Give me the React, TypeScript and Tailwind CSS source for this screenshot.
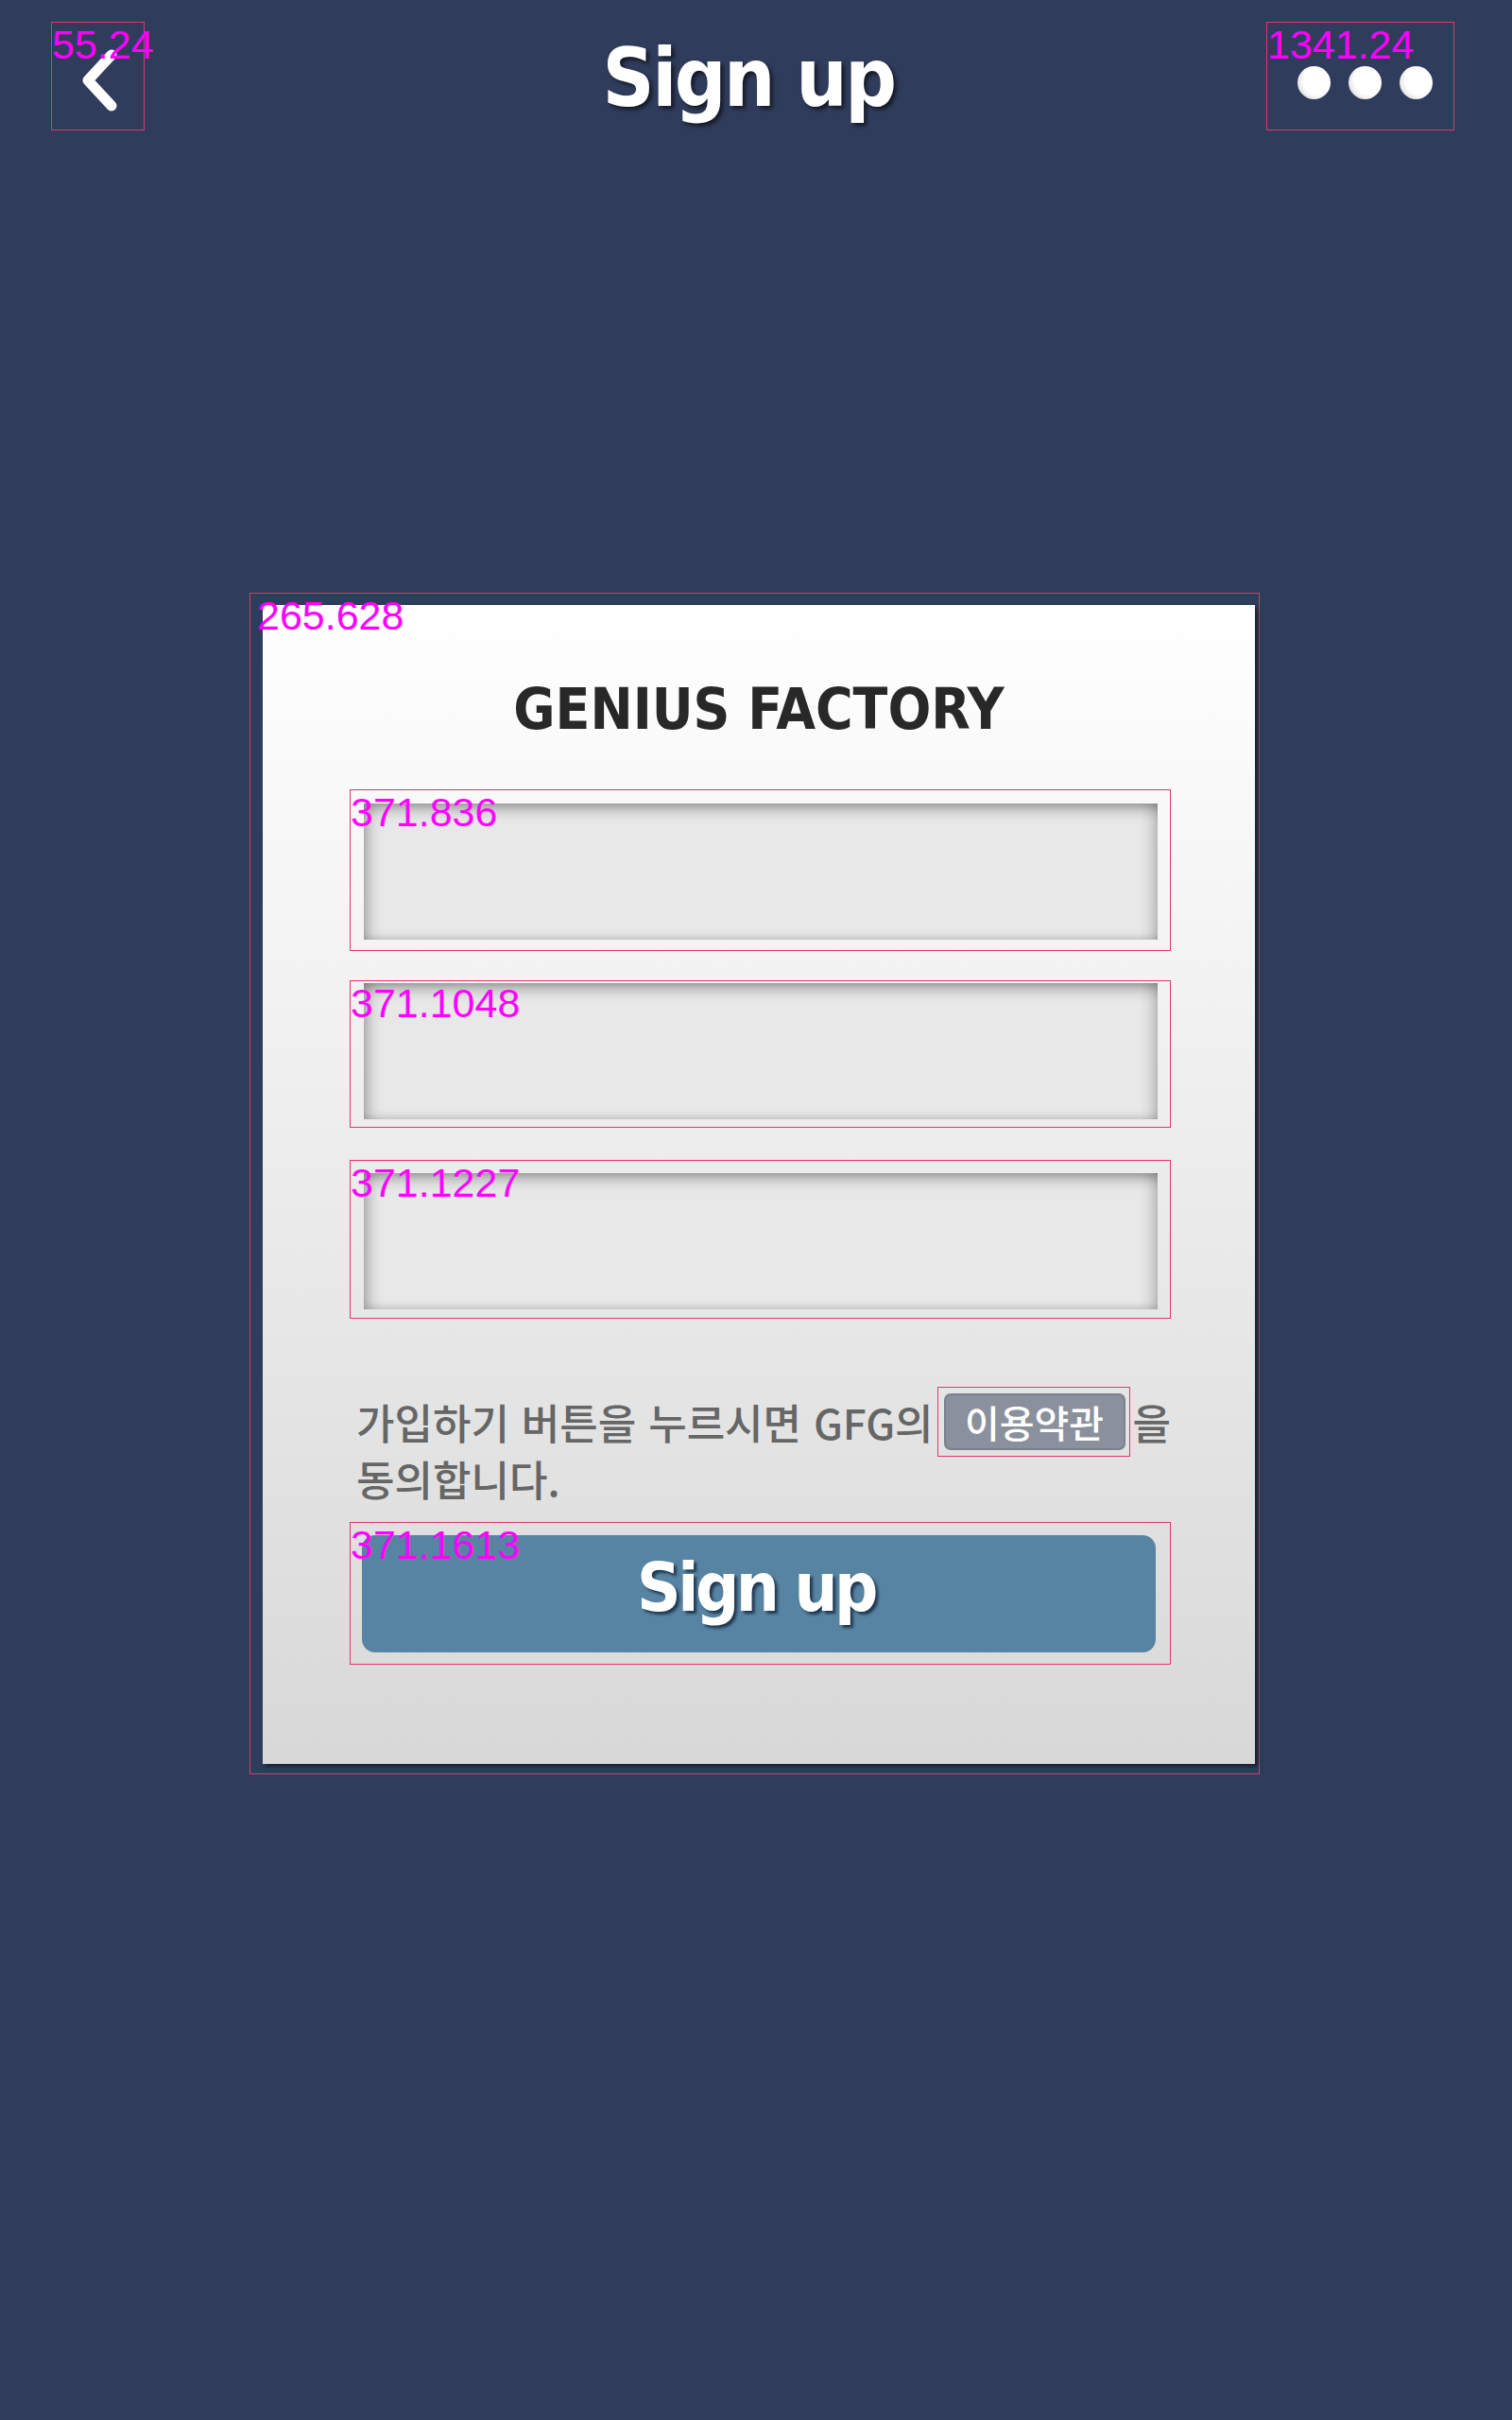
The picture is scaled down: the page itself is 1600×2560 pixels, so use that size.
import React from "react";

const titleFont =
  "font-['DejaVu_Sans_Condensed','DejaVu_Sans',sans-serif] font-stretch-condensed font-bold";
const koFont = "font-['Noto_Sans_CJK_KR','Noto_Sans',sans-serif]";

// debug outline + coordinate tag drawn over an element
function Marked({
  label,
  tag = "left-0",
  className,
  children,
}: {
  label?: string;
  tag?: string;
  className: string;
  children: React.ReactNode;
}) {
  return (
    <div className={`relative border border-[#e5356b] ${className}`}>
      {children}
      {label && (
        <span
          className={`pointer-events-none absolute top-[2px] z-10 whitespace-nowrap font-['Liberation_Sans',sans-serif] text-[43px] leading-none text-[#ff00ff] ${tag}`}
        >
          {label}
        </span>
      )}
    </div>
  );
}

function Field() {
  return (
    <input
      type="text"
      className="block h-[144px] w-[840px] bg-[#e8e8e8] outline-none shadow-[inset_0_14px_16px_-10px_rgba(0,0,0,0.4),inset_14px_0_16px_-10px_rgba(0,0,0,0.3),inset_-14px_0_16px_-10px_rgba(0,0,0,0.24),inset_0_-10px_12px_-10px_rgba(0,0,0,0.18)]"
    />
  );
}

function Dot() {
  return (
    <span className="block h-[35px] w-[35px] rounded-full bg-[radial-gradient(circle_at_62%_42%,#ffffff_0%,#ffffff_52%,#ececec_68%,#a4a4a4_100%)]" />
  );
}

export default function App() {
  return (
    <div className="min-h-[2560px] w-full bg-[#303c5c]">
      <header className="flex items-start pt-[23px]">
        <Marked label="55.24" className="ml-[54px] h-[115px] w-[99px]">
          <svg viewBox="0 0 97 113" className="absolute inset-0 h-full w-full">
            <path
              d="M63 34 L38 61 L63 88"
              fill="none"
              stroke="#ffffff"
              strokeWidth="11"
              strokeLinecap="round"
              strokeLinejoin="round"
            />
          </svg>
        </Marked>

        <h1
          className={`mt-[17px] flex-1 pl-[91px] text-center text-[85px] leading-none tracking-[-2.5px] text-white ${titleFont} [text-shadow:3px_3px_4px_rgba(0,0,0,0.6)]`}
        >
          Sign up
        </h1>

        <Marked label="1341.24" className="mr-[61px] h-[115px] w-[199px]">
          <div className="flex gap-[19px] pl-[32px] pt-[46px]">
            <Dot />
            <Dot />
            <Dot />
          </div>
        </Marked>
      </header>

      <Marked
        label="265.628"
        tag="left-[7px]"
        className="ml-[264px] mt-[489px] w-[1069px] pb-[10px] pl-[13px] pr-[4px] pt-[12px]"
      >
        <div className="w-[1050px] bg-[linear-gradient(to_bottom,#ffffff,#d8d8d8)] pb-[105px] pt-[80px] shadow-[3px_3px_4px_rgba(0,0,0,0.45)]">
          <h2
            className={`text-center text-[60px] leading-none text-[#282828] ${titleFont}`}
          >
            GENIUS FACTORY
          </h2>

          <Marked label="371.836" className="ml-[92px] mt-[55px] w-[869px] pb-[11px] pl-[14px] pt-[14px]">
            <Field />
          </Marked>

          <Marked label="371.1048" className="ml-[92px] mt-[31px] w-[869px] pb-[8px] pl-[14px] pt-[2px]">
            <Field />
          </Marked>

          <Marked label="371.1227" className="ml-[92px] mt-[34px] w-[869px] pb-[9px] pl-[14px] pt-[13px]">
            <Field />
          </Marked>

          <div className={`ml-[99px] mt-[72px] font-medium text-[#666666] ${koFont}`}>
            <div className="flex h-[74px] items-center whitespace-nowrap text-[44px] leading-[60px] [word-spacing:3px]">
              <span>가입하기 버튼을 누르시면 GFG의</span>
              <Marked className="ml-[4px] flex h-[74px] w-[204px] items-center pl-[6px] pr-[3px]">
                <span className="flex h-[60px] w-[192px] items-center justify-center rounded-[7px] border-2 border-[#7a808c] bg-[#8a909c] text-[40px] leading-none text-white">
                  이용약관
                </span>
              </Marked>
              <span className="ml-[3px]">을</span>
            </div>
            <div className="whitespace-nowrap text-[44px] leading-[46px]">동의합니다.</div>
          </div>

          <Marked label="371.1613" className="ml-[92px] mt-[23px] w-[869px] pb-[12px] pl-[12px] pt-[13px]">
            <button
              type="button"
              className={`flex h-[124px] w-[840px] items-center justify-center rounded-[14px] bg-[#5784a3] pb-[14px] pr-[6px] text-[72px] leading-none tracking-[-3.5px] text-white ${titleFont} [text-shadow:3px_3px_3px_rgba(18,38,60,0.8)]`}
            >
              Sign up
            </button>
          </Marked>
        </div>
      </Marked>
    </div>
  );
}
